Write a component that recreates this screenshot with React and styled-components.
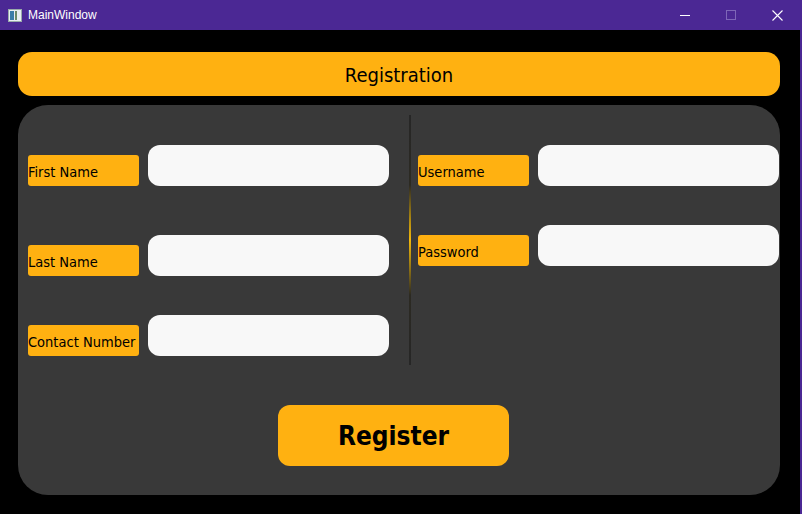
import React from "react";
import styled, { createGlobalStyle } from "styled-components";

const GlobalStyle = createGlobalStyle`
  html, body {
    margin: 0;
    padding: 0;
    background: #000;
  }
  body {
    font-family: "DejaVu Sans Condensed", "DejaVu Sans", sans-serif;
  }
`;

const Window = styled.div`
  width: 802px;
  height: 514px;
  display: flex;
  flex-direction: column;
  background: #000;
  border-right: 2px solid #4b2894;
  box-sizing: border-box;
  overflow: hidden;
`;

const TitleBar = styled.div`
  height: 30px;
  flex: none;
  display: flex;
  align-items: center;
  background: #4b2894;
  color: #fff;
  font-family: "Liberation Sans", sans-serif;
  font-size: 12px;
  padding-left: 8px;
`;

const TitleText = styled.span`
  margin-left: 6px;
  flex: 1;
`;

const WinButton = styled.div`
  width: 46px;
  height: 30px;
  display: flex;
  align-items: center;
  justify-content: center;
`;

const Content = styled.div`
  flex: 1;
  display: flex;
  flex-direction: column;
  padding: 22px 20px 0 18px;
  gap: 9px;
`;

const Header = styled.div`
  height: 44px;
  border-radius: 14px;
  background: #ffb111;
  display: flex;
  align-items: center;
  justify-content: center;
  font-size: 20px;
  padding-top: 2px;
  box-sizing: border-box;
  color: #000;
`;

const Panel = styled.div`
  height: 390px;
  border-radius: 30px;
  background: #393939;
  display: flex;
  flex-direction: column;
  padding: 10px 1px 0 10px;
  box-sizing: border-box;
`;

const Columns = styled.div`
  display: flex;
  height: 250px;
`;

const Column = styled.div`
  width: 361px;
  display: flex;
  flex-direction: column;
  padding-top: 30px;
`;

const Divider = styled.div`
  width: 2px;
  margin: 0 7px 0 20px;
  background: linear-gradient(
    to bottom,
    #262626 0%,
    #2c2a22 28%,
    #b08a10 42%,
    #f2b80c 50%,
    #b08a10 58%,
    #2c2a22 72%,
    #262626 100%
  );
`;

const Row = styled.div`
  display: flex;
  align-items: flex-end;
  gap: 9px;
  margin-top: ${(p) => p.$mt || 0}px;
`;

const Label = styled.div`
  width: 111px;
  height: 31px;
  flex: none;
  border-radius: 3px;
  background: #ffb111;
  color: #000;
  font-size: 14.5px;
  display: flex;
  align-items: center;
  padding-top: 2px;
  box-sizing: border-box;
  white-space: nowrap;
`;

const Input = styled.input`
  width: 241px;
  height: 41px;
  border: none;
  outline: none;
  border-radius: 12px;
  background: #f8f8f8;
  box-sizing: border-box;
  padding: 0 10px;
`;

const Footer = styled.div`
  display: flex;
  justify-content: center;
  padding: 40px 0 0 0;
  margin-left: -20px;
`;

const RegisterButton = styled.button`
  width: 231px;
  height: 61px;
  border: none;
  border-radius: 12px;
  background: #ffb111;
  color: #000;
  font-family: "DejaVu Sans Condensed", "DejaVu Sans", sans-serif;
  font-weight: bold;
  font-size: 26px;
  padding-top: 2px;
  cursor: pointer;
`;

const AppIcon = () => (
  <svg width="14" height="13" viewBox="0 0 14 13">
    <rect x="0.5" y="0.5" width="13" height="12" fill="#e8eef2" stroke="#9aa" />
    <rect x="2" y="2" width="4" height="9" fill="#3a7ca8" />
    <rect x="7" y="2" width="2" height="9" fill="#6a8a6a" />
  </svg>
);

const fields = {
  left: [
    { label: "First Name", mt: 0 },
    { label: "Last Name", mt: 49 },
    { label: "Contact Number", mt: 39 },
  ],
  right: [
    { label: "Username", mt: 0 },
    { label: "Password", mt: 39 },
  ],
};

const App = () => {
  return (
    <>
      <GlobalStyle />
      <Window>
        <TitleBar>
          <AppIcon />
          <TitleText>MainWindow</TitleText>
          <WinButton>
            <svg width="10" height="10" viewBox="0 0 10 10">
              <line x1="0" y1="5.5" x2="10" y2="5.5" stroke="#fff" strokeWidth="1" />
            </svg>
          </WinButton>
          <WinButton>
            <svg width="10" height="10" viewBox="0 0 10 10">
              <rect x="0.5" y="0.5" width="9" height="9" fill="none" stroke="#7e66b8" strokeWidth="1" />
            </svg>
          </WinButton>
          <WinButton>
            <svg width="11" height="11" viewBox="0 0 11 11">
              <path d="M0.5 0.5 L10.5 10.5 M10.5 0.5 L0.5 10.5" stroke="#fff" strokeWidth="1.1" />
            </svg>
          </WinButton>
        </TitleBar>
        <Content>
          <Header>Registration</Header>
          <Panel>
            <Columns>
              <Column>
                {fields.left.map((f) => (
                  <Row key={f.label} $mt={f.mt}>
                    <Label>{f.label}</Label>
                    <Input />
                  </Row>
                ))}
              </Column>
              <Divider />
              <Column>
                {fields.right.map((f) => (
                  <Row key={f.label} $mt={f.mt}>
                    <Label>{f.label}</Label>
                    <Input type={f.label === "Password" ? "password" : "text"} />
                  </Row>
                ))}
              </Column>
            </Columns>
            <Footer>
              <RegisterButton>Register</RegisterButton>
            </Footer>
          </Panel>
        </Content>
      </Window>
    </>
  );
};

export default App;
